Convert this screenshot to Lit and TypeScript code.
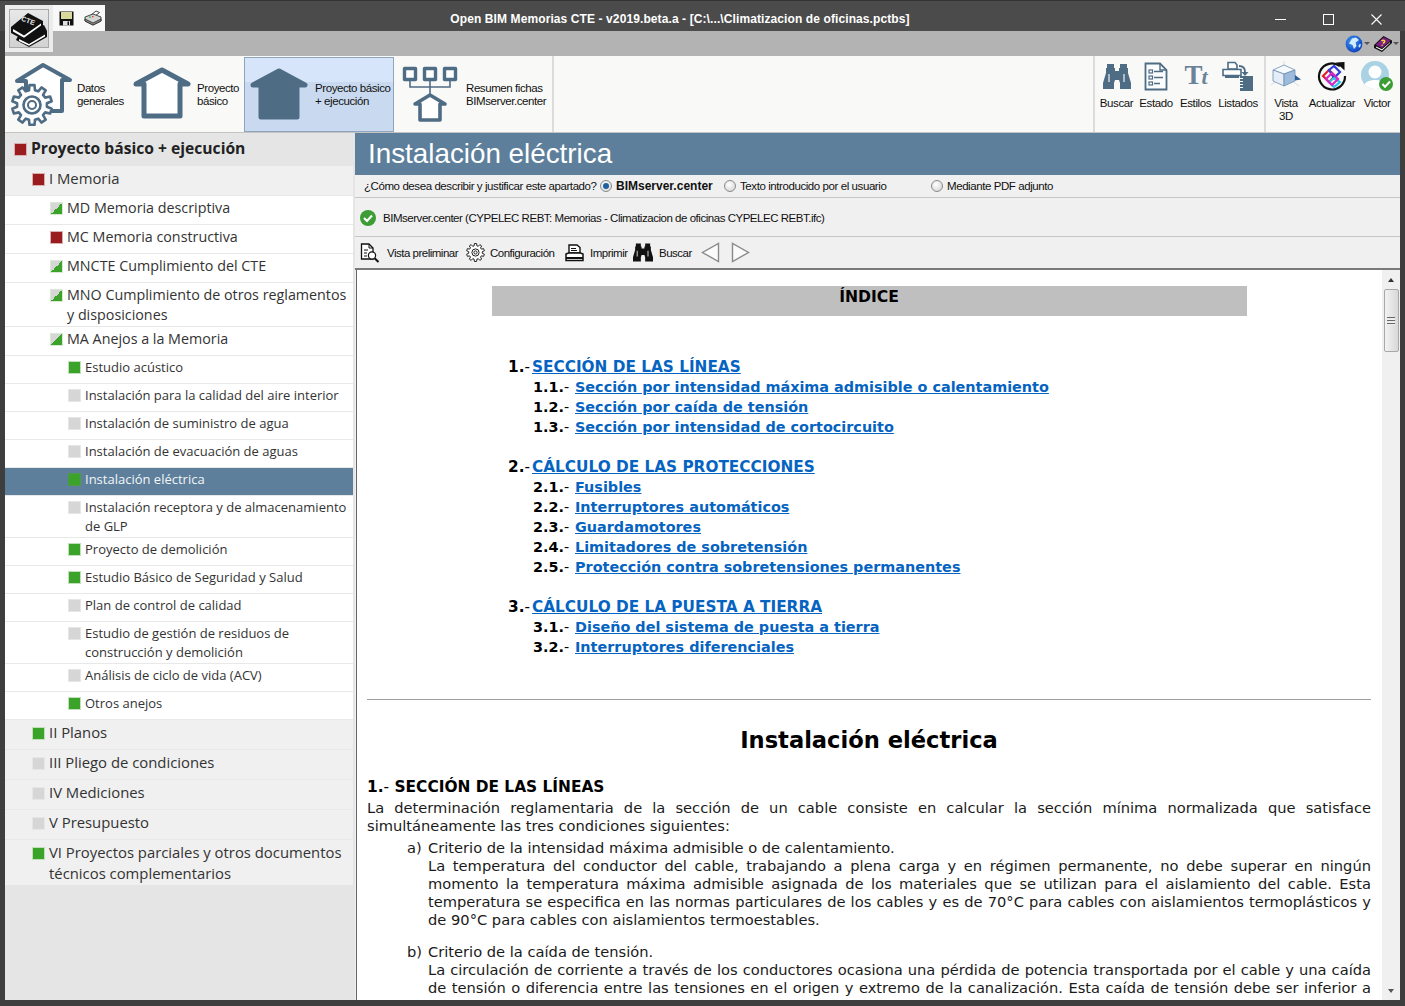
import { LitElement, html, css } from "lit";
import { customElement } from "lit/decorators.js";

const BLUE = "#4f6c85";

function gearPath(cx: number, cy: number, ro: number, ri: number, teeth: number): string {
  const pts: string[] = [];
  const step = (Math.PI * 2) / teeth;
  for (let i = 0; i < teeth; i++) {
    const a = i * step - Math.PI / 2;
    const w = step * 0.2;
    const g = step * 0.32;
    const p = (r: number, t: number) => `${(cx + r * Math.cos(t)).toFixed(2)} ${(cy + r * Math.sin(t)).toFixed(2)}`;
    pts.push(p(ri, a - g), p(ro, a - w), p(ro, a + w), p(ri, a + g));
  }
  return "M" + pts.join("L") + "Z";
}

const housePath = (x: number, y: number, s = 1) =>
  `M${x} ${y}L${x + 26 * s} ${y + 14 * s}H${x + 18 * s}V${y + 46 * s}H${x - 18 * s}V${y + 14 * s}H${x - 26 * s}Z`;

const binoc = (c: string, w: number, h: number) => html`<svg width=${w} height=${h} viewBox="0 0 28 25">
  <path fill=${c} d="M4 0h7v4h1v3h4V4h1V0h7v4h1v5l3 10v6H17v-6l-1-3h-4l-1 3v6H0v-6L3 9V4h1z" />
  <path fill="#fff" opacity=".55" d="M5 10h2v8H5zM20 10h2v8h-2z" />
</svg>`;

const icons = {
  datos: html`<svg width="64" height="64" viewBox="0 0 64 64">
    <path fill="#fff" stroke=${BLUE} stroke-width="4" stroke-linejoin="round" d="M33 3L60 18H52V49H16V19H7Z" />
    <path fill="#fff" stroke=${BLUE} stroke-width="2.6" stroke-linejoin="round" d=${gearPath(22, 43, 20, 15, 10)} />
    <circle cx="22" cy="43" r="8.5" fill="#fff" stroke=${BLUE} stroke-width="2.6" />
    <circle cx="22" cy="43" r="4" fill="#fff" stroke=${BLUE} stroke-width="2" />
  </svg>`,
  basico: html`<svg width="58" height="54" viewBox="0 0 58 54">
    <path fill="#fff" stroke=${BLUE} stroke-width="5" stroke-linejoin="round" d=${housePath(29, 3)} />
  </svg>`,
  ejec: html`<svg width="58" height="54" viewBox="0 0 58 54">
    <path fill=${BLUE} stroke=${BLUE} stroke-width="5" stroke-linejoin="round" d=${housePath(29, 3)} />
  </svg>`,
  resumen: html`<svg width="56" height="56" viewBox="0 0 56 56">
    <g fill="#fff" stroke=${BLUE} stroke-width="3.4" stroke-linejoin="round">
      <rect x="2.5" y="2.5" width="11" height="11" />
      <rect x="22.5" y="2.5" width="11" height="11" />
      <rect x="42.5" y="2.5" width="11" height="11" />
    </g>
    <path fill="none" stroke=${BLUE} stroke-width="1.6" d="M8 14V21H48V14M28 14V28" />
    <path fill="#fff" stroke=${BLUE} stroke-width="3.6" stroke-linejoin="round" d="M28 29L43 38H38V54H18V38H13Z" />
  </svg>`,
  estado: html`<svg width="24" height="29" viewBox="0 0 24 29">
    <path fill="#fbfcfd" stroke=${BLUE} stroke-width="1.8" d="M1.5 1.5H16L22.5 8V27.5H1.5Z" />
    <path fill="none" stroke=${BLUE} stroke-width="1.4" d="M16 1.5V8H22.5" />
    <g fill="none" stroke=${BLUE} stroke-width="1.2">
      <rect x="5" y="8" width="3.5" height="3" /><rect x="5" y="14" width="3.5" height="3" /><rect x="5" y="20" width="3.5" height="3" />
      <path d="M10 9.5H19M10 15.5H19M10 21.5H16" stroke-width="1.5" />
    </g>
  </svg>`,
  listados: html`<svg width="32" height="30" viewBox="0 0 32 30">
    <g fill="none" stroke=${BLUE} stroke-width="1.6">
      <path fill="#fff" d="M6 1.5H13L15 4V8H6Z" />
      <path fill="#fff" d="M1 8.5H19V14.5H1Z" />
      <path d="M3 16H17" stroke-width="2" />
    </g>
    <path fill="none" stroke=${BLUE} stroke-width="1.8" d="M17 5C21 5 23 7 23 11" />
    <path fill=${BLUE} d="M19.5 11H26.5L23 15Z" />
    <rect x="18" y="15" width="13" height="15" fill=${BLUE} />
    <path stroke="#fff" stroke-width="1" d="M18 17.5h3M18 20.5h3M18 23.5h3M18 26.5h3" />
  </svg>`,
  cube: html`<svg width="30" height="30" viewBox="0 0 30 30">
    <path fill="none" stroke="#ccd6e0" stroke-width=".8" d="M13 0V8M0 24L7 19M20 19L28 25" />
    <path fill="#f7fafd" stroke="#6f8fb2" stroke-width=".8" d="M2 9L13 4L24 9L13 13Z" />
    <path fill="#e5eef7" stroke="#6f8fb2" stroke-width=".8" d="M2 9L13 13V25L2 20Z" />
    <path fill="#9dbbdc" stroke="#6f8fb2" stroke-width=".8" d="M13 13L24 9V20L13 25Z" />
    <path fill="#2d5f94" d="M24 14L30 18.5L24 19.5Z" />
  </svg>`,
  actualizar: html`<svg width="30" height="30" viewBox="0 0 30 30">
    <path fill="none" stroke="#111" stroke-width="2.2" d="M23 5.2A13 13 0 1 0 28 15" />
    <path fill="#111" d="M19 1.5L27.5 1V9.5Z" />
    <g fill="none" stroke-width="2.2">
      <path stroke="#e2192c" d="M6 15L12 9L18 15L12 21Z" />
      <path stroke="#2b3fd8" d="M12 9L17 5L23 11L17 17Z" />
      <path stroke="#27c9e8" d="M12 21L17 17L23 21L17 26Z" />
      <path stroke="#d925c6" d="M9 18L15 12L21 18L15 24Z" />
    </g>
  </svg>`,
  victor: html`<svg width="34" height="32" viewBox="0 0 34 32">
    <defs><clipPath id="av"><circle cx="15" cy="15" r="14" /></clipPath></defs>
    <circle cx="15" cy="15" r="14" fill="#a9d2e4" />
    <g clip-path="url(#av)" fill="#fff">
      <circle cx="15" cy="12" r="6.5" />
      <path d="M3 30C3 22 9 20 15 20S27 22 27 30Z" />
    </g>
    <circle cx="26" cy="24" r="7" fill="#3d9c35" />
    <path fill="none" stroke="#fff" stroke-width="2" d="M22.5 24L25 26.8L30 21.5" />
  </svg>`,
  globe: html`<svg width="18" height="18" viewBox="0 0 18 18">
    <defs><radialGradient id="gl" cx=".4" cy=".35" r=".75"><stop offset="0" stop-color="#3f9af5" /><stop offset="1" stop-color="#0636b8" /></radialGradient></defs>
    <circle cx="9" cy="9" r="8.4" fill="url(#gl)" />
    <path fill="#d4ecff" d="M7 3.5L11 2.5L14 5L10.5 7.5L11.5 11L9 14L7.5 10L4 8.5Z" />
    <path fill="#d4ecff" d="M14 9.5L16 9L15 12.5L13.5 12Z" />
  </svg>`,
  help: html`<svg width="18" height="16" viewBox="0 0 18 16">
    <path fill="#111" d="M0 9L9.5 0L18 4.5V7L8 16L0 12Z" />
    <path fill="#7b1f7f" d="M1.5 8.8L9.7 1.2L16.5 4.6L8 12Z" />
    <path fill="#fff" d="M2 10.5L8 13.2L16 6.2V7L8 14.5L2 11.6Z" />
    <path fill="none" stroke="#ffd93a" stroke-width="1.5" d="M7.5 5C9 3.5 11.5 4.5 10.4 6.2L9 7.3M8.2 8.8V9.8" />
  </svg>`,
  save: html`<svg width="15" height="15" viewBox="0 0 15 15">
    <rect x=".5" y=".5" width="14" height="14" fill="#111" />
    <rect x="2" y="1" width="11" height="7" fill="#d8d99a" />
    <rect x="4" y="10" width="7" height="4.5" fill="#dedede" />
    <rect x="8.5" y="10.5" width="1.5" height="3.5" fill="#111" />
  </svg>`,
  print: html`<svg width="18" height="16" viewBox="0 0 18 16">
    <path fill="#fff" stroke="#333" stroke-width=".9" d="M7 5L12 1L15.5 2.5L11 6Z" />
    <path fill="#d4d4d4" stroke="#333" stroke-width=".9" d="M1 7L9 4L17 7V11L9 15L1 11Z" />
    <path fill="#8f8f8f" stroke="#333" stroke-width=".9" d="M1 9L9 13L17 9V11L9 15L1 11Z" />
    <path fill="#2ec04a" d="M5 6.5h2v1.2H5z" />
    <path fill="#e33" d="M8 6h1.5v1.2H8z" />
  </svg>`,
  book: html`<svg width="38" height="38" viewBox="0 0 38 38">
    <path fill="#111" d="M8 26L34 15L37 21V27L19 37L6 30Z" />
    <path fill="#fff" d="M9 29L19 34L35 24.5V26.5L19 35.8L9 31Z" />
    <path fill="#111" d="M1 17L18 3L33 11V16L14 30L1 23Z" />
    <path fill="#fff" d="M3 19L14 25.5L31 13.5V15.5L14 27.8L3 21.5Z" />
    <text x="18" y="13" font-family="Liberation Sans, sans-serif" font-size="7" font-weight="700" fill="#e8e8e8" transform="rotate(20 18 11)" text-anchor="middle">CTE</text>
  </svg>`,
  check: html`<svg width="16" height="16" viewBox="0 0 16 16">
    <circle cx="8" cy="8" r="8" fill="#3d9c35" />
    <path fill="none" stroke="#fff" stroke-width="2.2" d="M4 8L7 11L12 5.5" />
  </svg>`,
  preview: html`<svg width="20" height="20" viewBox="0 0 20 20">
    <path fill="#fff" stroke="#111" stroke-width="1.3" d="M1.5 1H9L13 5V16H1.5Z" />
    <path fill="none" stroke="#111" d="M9 1V5H13M4 7H8M4 10H7M4 13H7" />
    <circle cx="12" cy="12.5" r="3.6" fill="#fff" stroke="#111" stroke-width="1.2" />
    <path stroke="#111" stroke-width="2" d="M14.6 15.2L18.5 19" />
  </svg>`,
  gear: html`<svg width="19" height="19" viewBox="0 0 19 19">
    <path fill="#fff" stroke="#222" stroke-width="1" stroke-linejoin="round" d=${gearPath(9.5, 9.5, 9, 6.8, 10)} />
    <circle cx="9.5" cy="9.5" r="3.6" fill="#fff" stroke="#222" />
    <circle cx="9.5" cy="9.5" r="1.6" fill="#fff" stroke="#222" />
  </svg>`,
  printer: html`<svg width="19" height="18" viewBox="0 0 19 18">
    <path fill="#fff" stroke="#111" stroke-width="1.4" d="M4 1H12L15 3.5V9H4Z" />
    <path stroke="#111" d="M6 4.5H11M6 6.5H12" />
    <path fill="#fff" stroke="#111" stroke-width="1.5" d="M1 10L3.5 9H15.5L18 10V16.5H1Z" />
    <path stroke="#111" stroke-width="2" d="M1 14H18" />
  </svg>`,
  left: html`<svg width="19" height="21" viewBox="0 0 19 21"><path fill="#fbfbfb" stroke="#8a8a8a" stroke-width="1.4" d="M17.5 1.5V19.5L1.5 10.5Z" /></svg>`,
  right: html`<svg width="19" height="21" viewBox="0 0 19 21"><path fill="#fbfbfb" stroke="#8a8a8a" stroke-width="1.4" d="M1.5 1.5V19.5L17.5 10.5Z" /></svg>`,
  min: html`<svg width="11" height="11" viewBox="0 0 11 11"><path stroke="#fff" d="M0 5.5H11" /></svg>`,
  max: html`<svg width="11" height="11" viewBox="0 0 11 11"><rect x=".5" y=".5" width="10" height="10" fill="none" stroke="#fff" /></svg>`,
  close: html`<svg width="11" height="11" viewBox="0 0 11 11"><path stroke="#fff" stroke-width="1.1" d="M.5 .5L10.5 10.5M10.5 .5L.5 10.5" /></svg>`,
};

type Row = { t: string; l: number; s: "red" | "green" | "gray" | "half"; sel?: boolean };
const rows: Row[] = [
  { t: "Proyecto básico + ejecución", l: 0, s: "red" },
  { t: "I Memoria", l: 1, s: "red" },
  { t: "MD Memoria descriptiva", l: 2, s: "half" },
  { t: "MC Memoria constructiva", l: 2, s: "red" },
  { t: "MNCTE Cumplimiento del CTE", l: 2, s: "half" },
  { t: "MNO Cumplimiento de otros reglamentos y disposiciones", l: 2, s: "half" },
  { t: "MA Anejos a la Memoria", l: 2, s: "half" },
  { t: "Estudio acústico", l: 3, s: "green" },
  { t: "Instalación para la calidad del aire interior", l: 3, s: "gray" },
  { t: "Instalación de suministro de agua", l: 3, s: "gray" },
  { t: "Instalación de evacuación de aguas", l: 3, s: "gray" },
  { t: "Instalación eléctrica", l: 3, s: "green", sel: true },
  { t: "Instalación receptora y de almacenamiento de GLP", l: 3, s: "gray" },
  { t: "Proyecto de demolición", l: 3, s: "green" },
  { t: "Estudio Básico de Seguridad y Salud", l: 3, s: "green" },
  { t: "Plan de control de calidad", l: 3, s: "gray" },
  { t: "Estudio de gestión de residuos de construcción y demolición", l: 3, s: "gray" },
  { t: "Análisis de ciclo de vida (ACV)", l: 3, s: "gray" },
  { t: "Otros anejos", l: 3, s: "green" },
  { t: "II Planos", l: 1, s: "green" },
  { t: "III Pliego de condiciones", l: 1, s: "gray" },
  { t: "IV Mediciones", l: 1, s: "gray" },
  { t: "V Presupuesto", l: 1, s: "gray" },
  { t: "VI Proyectos parciales y otros documentos técnicos complementarios", l: 1, s: "green" },
];

const index: { n: string; t: string; sub: [string, string][] }[] = [
  {
    n: "1.",
    t: "SECCIÓN DE LAS LÍNEAS",
    sub: [
      ["1.1.", "Sección por intensidad máxima admisible o calentamiento"],
      ["1.2.", "Sección por caída de tensión"],
      ["1.3.", "Sección por intensidad de cortocircuito"],
    ],
  },
  {
    n: "2.",
    t: "CÁLCULO DE LAS PROTECCIONES",
    sub: [
      ["2.1.", "Fusibles"],
      ["2.2.", "Interruptores automáticos"],
      ["2.3.", "Guardamotores"],
      ["2.4.", "Limitadores de sobretensión"],
      ["2.5.", "Protección contra sobretensiones permanentes"],
    ],
  },
  {
    n: "3.",
    t: "CÁLCULO DE LA PUESTA A TIERRA",
    sub: [
      ["3.1.", "Diseño del sistema de puesta a tierra"],
      ["3.2.", "Interruptores diferenciales"],
    ],
  },
];

@customElement("app-root")
export class AppRoot extends LitElement {
  static styles = css`
    :host {
      display: flex;
      flex-direction: column;
      width: 1405px;
      height: 1006px;
      overflow: hidden;
      background: #3e3e3e;
      font-family: "Liberation Sans", Arial, sans-serif;
      color: #111;
    }
    * { box-sizing: border-box; }
    svg { display: block; flex: none; }
    .titlebar {
      flex: none;
      display: flex;
      height: 31px;
      background: #4b4b4b;
      border-top: 1px solid #333;
    }
    .appbtn {
      position: relative;
      z-index: 2;
      flex: none;
      width: 48px;
      height: 47px;
      margin: 4px 0 0 5px;
      padding: 4px;
      background: #ececec;
    }
    .appbtn div {
      width: 40px;
      height: 39px;
      padding: 0;
      border: 1px solid #a8a8a8;
      background: linear-gradient(#e8e8e8, #d2d2d2);
    }
    .qa {
      flex: none;
      display: flex;
      align-items: center;
      width: 52px;
      height: 26px;
      margin-top: 4px;
      padding-left: 6px;
      gap: 10px;
      background: #f8f8f8;
    }
    .title {
      flex: 1;
      padding-right: 1px;
      text-align: center;
      color: #fff;
      font-size: 12px;
      font-weight: 700;
      line-height: 37px;
      letter-spacing: 0.1px;
      white-space: nowrap;
    }
    .ctrls { flex: none; display: flex; margin-right: 5px; }
    .ctrl { width: 48px; height: 30px; display: flex; align-items: center; justify-content: center; padding-top: 6px; }
    .band {
      flex: none;
      display: flex;
      justify-content: flex-end;
      align-items: center;
      height: 25px;
      margin: 0 5px;
      padding: 0 1px 0 0;
      background: #b3b3b3;
    }
    .caret { flex: none; width: 6px; height: 6px; border: 3px solid transparent; border-top: 3px solid #555; margin: 3px 0 0 1px; }
    .caret.first { margin-right: 4px; }
    .ribbon {
      flex: none;
      display: flex;
      height: 77px;
      margin: 0 5px;
      background: #f9f9f7;
      border-bottom: 1px solid #c4c4c4;
    }
    .rtext { font-size: 11.5px; line-height: 13px; letter-spacing: -0.42px; color: #111; white-space: nowrap; }
    .ritem .rtext { padding-top: 2px; }
    .group1 { flex: none; width: 549px; display: flex; border-right: 2px solid #dcdcdc; }
    .ritem { display: flex; align-items: center; }
    .i1 { width: 122px; padding-left: 5px; gap: 3px; }
    .i2 { width: 117px; padding-left: 6px; gap: 6px; }
    .i3 {
      width: 150px;
      height: 75px;
      margin-top: 1px;
      padding-left: 5px;
      gap: 7px;
      border: 1px solid #8fa5bd;
      background: linear-gradient(#d6e5fa 0 33%, #c9daf0 33%);
    }
    .ritem.i3 .rtext { padding-top: 0; }
    .i4 { flex: 1; padding-left: 8px; gap: 8px; }
    .spacer { flex: 1; }
    .gr { flex: none; display: grid; height: 100%; border-left: 2px solid #dcdcdc; }
    .g2 { grid-template-columns: 39px 40px 39px 46px; width: 171px; padding-left: 2px; }
    .g3 { grid-template-columns: 40px 52px 38px; width: 136px; }
    .tool { display: flex; flex-direction: column; align-items: center; padding-top: 2px; text-align: center; }
    .tool .ic { height: 36px; display: flex; align-items: center; justify-content: center; }
    .tool .rtext { margin-top: 3px; }
    .tt { font-family: "Liberation Serif", serif; font-weight: 700; font-size: 27px; color: #6b8399; line-height: 28px; letter-spacing: -1px; }
    .tt i { font-size: 22px; font-weight: 700; }

    .main { flex: 1; min-height: 0; display: flex; margin: 0 5px 6px; }
    .side { flex: none; width: 350px; padding-right: 2px; background: #e5e5e5; overflow: hidden; }
    .row { display: flex; border-bottom: 1px solid #e8e8e8; color: #333; font-family: "Open Sans", sans-serif; }
    .sq { flex: none; width: 13px; height: 13px; margin-right: 4px; border: 1px solid #e6e6e6; }
    .red { background: #9b1c1f; border-color: #d8b0b0; }
    .green { background: #3ba32a; border-color: #bfe0b8; }
    .gray { background: #d6d6d6; border-color: #e6e6e6; }
    .half { background: linear-gradient(to bottom right, #d6d6d6 50%, #3ba32a 50%); border-color: #d8ead4; }
    .l0 { height: 33px; padding: 5px 0 0 9px; background: #e5e5e5; border: none; font-weight: 700; font-size: 15.65px; line-height: 20px; color: #222; }
    .l0 .sq { margin-top: 5px; }
    .l1 { min-height: 30px; padding: 2px 4px 1px 27px; background: #f0f0f0; font-size: 14.85px; line-height: 21px; }
    .l1 .sq { margin-top: 5px; }
    .l2 { min-height: 29px; padding: 2px 4px 1px 45px; background: #fff; font-size: 14.3px; line-height: 20px; }
    .l2 .sq { margin-top: 4px; }
    .l3 { min-height: 28px; padding: 2px 4px 1px 63px; background: #fff; font-size: 13px; line-height: 19px; }
    .l3 .sq { margin-top: 3px; }
    .row.sel { background: #5d7f9b; color: #f2f5f8; }
    .row.sel .sq { border-color: #4f9a4a; }
    .row.last { border-bottom: none; }

    .content { flex: 1; min-width: 0; display: flex; flex-direction: column; background: #f0f0f0; }
    .heading { flex: none; height: 42px; padding: 0 0 0 13px; background: #5d7f9b; color: #fff; font-size: 27.8px; line-height: 41px; }
    .optrow { flex: none; display: flex; align-items: center; height: 23px; padding-left: 9px; border-bottom: 1px solid #c6c6c6; font-size: 11.5px; letter-spacing: -0.42px; white-space: nowrap; }
    .q { width: 236px; }
    .opt { display: flex; align-items: center; gap: 4px; }
    .o1 { width: 124px; font-size: 12px; font-weight: 700; letter-spacing: 0; }
    .o2 { width: 207px; }
    .radio { flex: none; width: 12px; height: 12px; border-radius: 50%; border: 1px solid #8a8a8a; background: radial-gradient(circle at 40% 35%, #fff, #cfcfcf); display: flex; align-items: center; justify-content: center; }
    .radio b { display: block; width: 6px; height: 6px; border-radius: 50%; background: #1f5f9e; }
    .status { flex: none; display: flex; align-items: center; gap: 7px; height: 39px; padding: 2px 0 0 5px; border-bottom: 1px solid #c6c6c6; font-size: 11.5px; letter-spacing: -0.47px; white-space: nowrap; }
    .tb { flex: none; display: flex; align-items: center; height: 33px; padding-left: 5px; font-size: 11.5px; letter-spacing: -0.5px; white-space: nowrap; border-bottom: 2px solid #7a7a7a; }
    .cell { flex: none; display: flex; align-items: center; }
    .c1 { width: 106px; gap: 7px; }
    .c2 { width: 99px; gap: 5px; }
    .c3 { width: 68px; gap: 6px; }
    .c4 { width: 68px; gap: 6px; }
    .c5 { width: 30px; }

    .docwrap { flex: 1; min-height: 0; display: flex; margin-left: 1px; border-left: 1px solid #666; background: #fff; }
    .doc {
      flex: 1;
      min-width: 0;
      overflow: hidden;
      padding: 16px 11px 0 10px;
      font-family: "DejaVu Sans", Verdana, sans-serif;
      font-size: 14.67px;
      line-height: 18px;
      color: #1a1a1a;
    }
    .idxhead { width: 755px; height: 30px; margin: 0 auto; background: #bfbfbf; text-align: center; font-weight: 700; font-size: 15.6px; color: #000; line-height: 23px; }
    .idx { margin: 41px 0 0 141px; font-weight: 700; line-height: 20px; color: #000; font-size: 14.4px; }
    .idxgroup { margin-bottom: 20px; }
    .idxline { display: flex; }
    .idxline.top { font-size: 15.3px; }
    .num1 { width: 24px; }
    .num2 { width: 42px; margin-left: 25px; }
    .dash { font-weight: 400; }
    .idx a { color: #0563c1; text-decoration: underline; }
    hr { margin: 42px 0 0; border: none; border-top: 1px solid #a0a0a0; }
    h1 { margin: 26px 0 0; text-align: center; font-size: 22.6px; line-height: 28px; font-weight: 700; color: #000; }
    h2 { margin: 24px 0 0; font-size: 15.4px; line-height: 18px; font-weight: 700; color: #000; }
    p { margin: 3px 0 0; text-align: justify; }
    p.cont { text-align-last: justify; }
    .li { display: flex; margin: 4px 0 0 40px; }
    .li.b { margin-top: 14px; }
    .li > span { flex: none; width: 21px; }
    .li p { margin: 0; }
    .sb { flex: none; width: 18px; background: #f0f0f0; display: flex; flex-direction: column; align-items: center; padding: 0 1px; }
    .arr { flex: none; height: 19px; display: flex; align-items: center; justify-content: center; }
    .up { width: 0; height: 0; border: 3.5px solid transparent; border-bottom: 4px solid #333; border-top: none; }
    .dn { width: 0; height: 0; border: 3.5px solid transparent; border-top: 4px solid #555; border-bottom: none; }
    .thumb {
      flex: none;
      width: 15px;
      height: 63px;
      border: 1px solid #a8a8a8;
      border-radius: 2px;
      background: linear-gradient(to right, #f2f2f2, #d8d8d8);
      display: flex;
      align-items: center;
      justify-content: center;
    }
    .grip { width: 8px; height: 8px; background: repeating-linear-gradient(#666 0 1px, #eee 1px 3px); }
    .track { flex: 1; }
  `;

  private row(r: Row, i: number) {
    const last = i === rows.length - 1;
    return html`<div class="row l${r.l} ${r.sel ? "sel" : ""} ${last ? "last" : ""}">
      <div class="sq ${r.s}"></div>
      <div>${r.t}</div>
    </div>`;
  }

  render() {
    return html`
      <div class="titlebar">
        <div class="appbtn"><div>${icons.book}</div></div>
        <div class="qa">${icons.save}${icons.print}</div>
        <div class="title">Open BIM Memorias CTE - v2019.beta.a - [C:\\...\\Climatizacion de oficinas.pctbs]</div>
        <div class="ctrls">
          <div class="ctrl">${icons.min}</div>
          <div class="ctrl">${icons.max}</div>
          <div class="ctrl">${icons.close}</div>
        </div>
      </div>
      <div class="band">${icons.globe}<div class="caret first"></div>${icons.help}<div class="caret"></div></div>
      <div class="ribbon">
        <div class="group1">
          <div class="ritem i1">${icons.datos}<div class="rtext">Datos<br />generales</div></div>
          <div class="ritem i2">${icons.basico}<div class="rtext">Proyecto<br />básico</div></div>
          <div class="ritem i3">${icons.ejec}<div class="rtext">Proyecto básico<br />+ ejecución</div></div>
          <div class="ritem i4">${icons.resumen}<div class="rtext">Resumen fichas<br />BIMserver.center</div></div>
        </div>
        <div class="spacer"></div>
        <div class="gr g2">
          <div class="tool"><div class="ic">${binoc(BLUE, 28, 25)}</div><div class="rtext">Buscar</div></div>
          <div class="tool"><div class="ic">${icons.estado}</div><div class="rtext">Estado</div></div>
          <div class="tool"><div class="ic"><div class="tt">T<i>t</i></div></div><div class="rtext">Estilos</div></div>
          <div class="tool"><div class="ic">${icons.listados}</div><div class="rtext">Listados</div></div>
        </div>
        <div class="gr g3">
          <div class="tool"><div class="ic">${icons.cube}</div><div class="rtext">Vista<br />3D</div></div>
          <div class="tool"><div class="ic">${icons.actualizar}</div><div class="rtext">Actualizar</div></div>
          <div class="tool"><div class="ic">${icons.victor}</div><div class="rtext">Victor</div></div>
        </div>
      </div>
      <div class="main">
        <div class="side">${rows.map((r, i) => this.row(r, i))}</div>
        <div class="content">
          <div class="heading">Instalación eléctrica</div>
          <div class="optrow">
            <div class="q">¿Cómo desea describir y justificar este apartado?</div>
            <div class="opt o1"><div class="radio"><b></b></div>BIMserver.center</div>
            <div class="opt o2"><div class="radio"></div>Texto introducido por el usuario</div>
            <div class="opt"><div class="radio"></div>Mediante PDF adjunto</div>
          </div>
          <div class="status">${icons.check}BIMserver.center (CYPELEC REBT: Memorias - Climatizacion de oficinas CYPELEC REBT.ifc)</div>
          <div class="tb">
            <div class="cell c1">${icons.preview}<span>Vista preliminar</span></div>
            <div class="cell c2">${icons.gear}<span>Configuración</span></div>
            <div class="cell c3">${icons.printer}<span>Imprimir</span></div>
            <div class="cell c4">${binoc("#111", 20, 19)}<span>Buscar</span></div>
            <div class="cell c5">${icons.left}</div>
            ${icons.right}
          </div>
          <div class="docwrap">
            <div class="doc">
              <div class="idxhead">ÍNDICE</div>
              <div class="idx">
                ${index.map(
                  (g) => html`<div class="idxgroup">
                    <div class="idxline top"><div class="num1">${g.n}<span class="dash">-</span></div><a>${g.t}</a></div>
                    ${g.sub.map((s) => html`<div class="idxline"><div class="num2">${s[0]}<span class="dash">-</span></div><a>${s[1]}</a></div>`)}
                  </div>`
                )}
              </div>
              <hr />
              <h1>Instalación eléctrica</h1>
              <h2>1.<span class="dash">-</span> SECCIÓN DE LAS LÍNEAS</h2>
              <p>La determinación reglamentaria de la sección de un cable consiste en calcular la sección mínima normalizada que satisface simultáneamente las tres condiciones siguientes:</p>
              <div class="li"><span>a)</span><div>
                <p>Criterio de la intensidad máxima admisible o de calentamiento.</p>
                <p>La temperatura del conductor del cable, trabajando a plena carga y en régimen permanente, no debe superar en ningún momento la temperatura máxima admisible asignada de los materiales que se utilizan para el aislamiento del cable. Esta temperatura se especifica en las normas particulares de los cables y es de 70°C para cables con aislamientos termoplásticos y de 90°C para cables con aislamientos termoestables.</p>
              </div></div>
              <div class="li b"><span>b)</span><div>
                <p>Criterio de la caída de tensión.</p>
                <p class="cont">La circulación de corriente a través de los conductores ocasiona una pérdida de potencia transportada por el cable y una caída de tensión o diferencia entre las tensiones en el origen y extremo de la canalización. Esta caída de tensión debe ser inferior a</p>
              </div></div>
            </div>
            <div class="sb">
              <div class="arr"><div class="up"></div></div>
              <div class="thumb"><div class="grip"></div></div>
              <div class="track"></div>
              <div class="arr"><div class="dn"></div></div>
            </div>
          </div>
        </div>
      </div>
    `;
  }
}
